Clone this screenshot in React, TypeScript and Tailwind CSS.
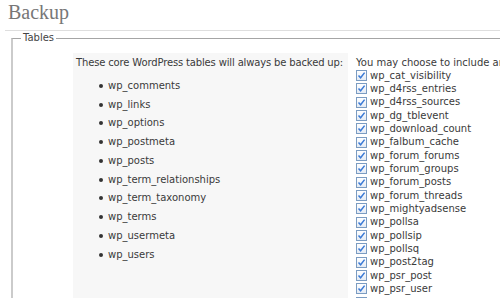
import React from 'react';

const coreTables = [
    'wp_comments',
    'wp_links',
    'wp_options',
    'wp_postmeta',
    'wp_posts',
    'wp_term_relationships',
    'wp_term_taxonomy',
    'wp_terms',
    'wp_usermeta',
    'wp_users',
];

const otherTables = [
    'wp_cat_visibility',
    'wp_d4rss_entries',
    'wp_d4rss_sources',
    'wp_dg_tblevent',
    'wp_download_count',
    'wp_falbum_cache',
    'wp_forum_forums',
    'wp_forum_groups',
    'wp_forum_posts',
    'wp_forum_threads',
    'wp_mightyadsense',
    'wp_pollsa',
    'wp_pollsip',
    'wp_pollsq',
    'wp_post2tag',
    'wp_psr_post',
    'wp_psr_user',
    'wp_rsrg',
    'wp_stats',
];

const Check = () => (
    <span className="flex h-[11px] w-[11px] shrink-0 items-center justify-center border border-[#7b9cc2] bg-gradient-to-b from-[#ffffff] to-[#e4ebf4]">
        <svg width="9" height="9" viewBox="0 0 9 9">
            <path d="M1.5 4.5 L3.6 6.8 L7.6 1.6" fill="none" stroke="#3a7ad6" strokeWidth="1.5" />
        </svg>
    </span>
);

export default function App() {
    return (
        <div
            className="h-[298px] w-[500px] overflow-hidden bg-white text-[10px] leading-[12px] text-[#3a3a3a]"
            style={{ fontFamily: '"DejaVu Sans", Verdana, sans-serif' }}
        >
            {/* page title */}
            <div className="ml-[5px] h-[31px] border-b border-[#dedede]">
                <h2
                    className="pl-[3px] pt-[2px] text-[20px] leading-[20px] text-[#777]"
                    style={{ fontFamily: '"Liberation Serif", Georgia, serif' }}
                >
                    Backup
                </h2>
            </div>

            <fieldset className="ml-[11px] mt-[1px] border-l-2 border-t border-l-[#cbcbcb] border-t-[#a5a5a5] pl-[8px]">
                <legend className="px-[2px] leading-[12px] text-[#444]">Tables</legend>
                <div className="mt-[9px] flex items-start whitespace-nowrap">
                    {/* core tables panel */}
                    <div className="ml-[52px] h-[260px] w-[275px] shrink-0 bg-[#f7f7f7] px-[3px] pt-[4px]">
                        <p className="tracking-[-0.15px]">These core WordPress tables will always be backed up:</p>
                        <ul className="mt-[7.6px] pl-[23px]">
                            {coreTables.map((t) => (
                                <li key={t} className="flex h-[18.75px] items-center">
                                    <span className="mr-[5px] h-[4px] w-[4px] rounded-full bg-[#333]" />
                                    {t}
                                </li>
                            ))}
                        </ul>
                    </div>

                    {/* optional tables */}
                    <div className="ml-[8px] pt-[4px]">
                        <p>You may choose to include any of the following tables:</p>
                        {otherTables.map((t) => (
                            <label key={t} className="flex h-[13.33px] items-center gap-[3px]">
                                <Check />
                                {t}
                            </label>
                        ))}
                    </div>
                </div>
            </fieldset>
        </div>
    );
}
